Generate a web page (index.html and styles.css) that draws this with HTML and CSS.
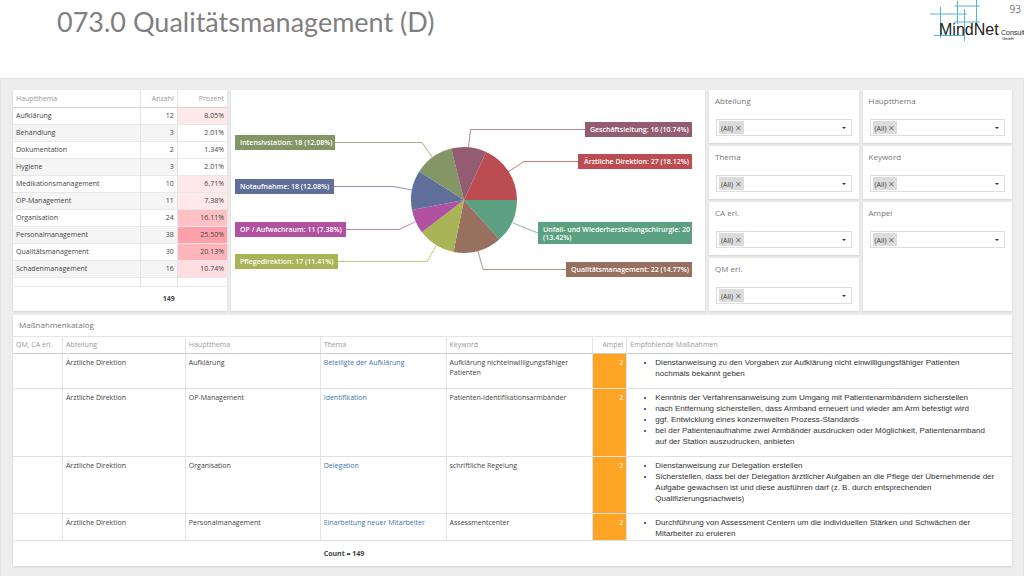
FILE: index.html
```html
<!DOCTYPE html>
<html lang="de">
<head>
<meta charset="utf-8">
<meta name="viewport" content="width=device-width, initial-scale=1">
<title>073.0 Qualitätsmanagement (D)</title>
<link rel="stylesheet" href="styles.css">
</head>
<body>
<header class="page-header">
  <h1 class="page-title">073.0 Qualitätsmanagement (D)</h1>
  <div class="brand">
    <svg class="logo" viewBox="0 0 94 42" role="img" aria-label="MindNet Consult GmbH">
      <g class="logo-grid">
        <path d="M10.5 7V38M27.5 1V24M34.5 9V41M46.5 0V24M24 6H50M0 14H37M24 22H50M4 35.5H35"/>
      </g>
      <text class="logo-name" x="9" y="35">MindNet</text>
      <text class="logo-sub" x="71" y="35">Consult</text>
      <text class="logo-legal" x="72" y="40">GmbH</text>
    </svg>
    <span class="page-number">93</span>
  </div>
</header>

<main class="dashboard">
  <div class="top-row">
    <section class="panel topics-panel">
      <table class="topics">
        <colgroup><col class="col-topic"><col class="col-count"><col class="col-percent"></colgroup>
        <thead><tr><th>Hauptthema</th><th class="num">Anzahl</th><th class="num">Prozent</th></tr></thead>
        <tbody>
          <tr><td>Aufklärung</td><td class="num">12</td><td class="num heat-1">8.05%</td></tr>
          <tr><td>Behandlung</td><td class="num">3</td><td class="num heat-0">2.01%</td></tr>
          <tr><td>Dokumentation</td><td class="num">2</td><td class="num heat-0">1.34%</td></tr>
          <tr><td>Hygiene</td><td class="num">3</td><td class="num heat-0">2.01%</td></tr>
          <tr><td>Medikationsmanagement</td><td class="num">10</td><td class="num heat-1">6.71%</td></tr>
          <tr><td>OP-Management</td><td class="num">11</td><td class="num heat-1">7.38%</td></tr>
          <tr><td>Organisation</td><td class="num">24</td><td class="num heat-3">16.11%</td></tr>
          <tr><td>Personalmanagement</td><td class="num">38</td><td class="num heat-5">25.50%</td></tr>
          <tr><td>Qualitätsmanagement</td><td class="num">30</td><td class="num heat-4">20.13%</td></tr>
          <tr><td>Schadenmanagement</td><td class="num">16</td><td class="num heat-2">10.74%</td></tr>
          <tr class="filler"><td></td><td></td><td></td></tr>
        </tbody>
        <tfoot><tr><td></td><td class="num">149</td><td></td></tr></tfoot>
      </table>
    </section>

    <section class="panel chart-panel">
      <svg class="pie" viewBox="0 0 474 221" role="img" aria-label="Verteilung nach Abteilung">
        <g class="c-unfall"><path d="M233 110L286 110A53 53 0 0 1 268.3 149.6Z"/><polyline points="307,143 282,133"/><rect x="307" y="132" width="154" height="22"/></g>
        <g class="c-quali"><path d="M233 110L268.3 149.6A53 53 0 0 1 222.5 161.9Z"/><polyline points="335,179.5 252,179.5 247,161"/><rect x="335" y="172" width="126" height="15"/></g>
        <g class="c-pflege"><path d="M233 110L222.5 161.9A53 53 0 0 1 190.9 142.2Z"/><polyline points="107,171.5 196,171.5 205,156"/><rect x="4" y="164" width="103" height="15"/></g>
        <g class="c-op"><path d="M233 110L190.9 142.2A53 53 0 0 1 181 120Z"/><polyline points="115,139.5 168,139.5 184,132"/><rect x="4" y="132" width="111" height="15"/></g>
        <g class="c-not"><path d="M233 110L181 120A53 53 0 0 1 188.3 81.4Z"/><polyline points="103,96.5 162,96.5 181,100"/><rect x="4" y="89" width="99" height="15"/></g>
        <g class="c-intensiv"><path d="M233 110L188.3 81.4A53 53 0 0 1 220.3 58.6Z"/><polyline points="104,52.5 191,52.5 201,67"/><rect x="4" y="45" width="100" height="15"/></g>
        <g class="c-gesch"><path d="M233 110L220.3 58.6A53 53 0 0 1 255.2 61.9Z"/><polyline points="354,39.5 239.5,39.5 237.5,57.5"/><rect x="354" y="32" width="107" height="15"/></g>
        <g class="c-aerzt"><path d="M233 110L255.2 61.9A53 53 0 0 1 286 110Z"/><polyline points="347,71.5 293,71.5 277,82"/><rect x="347" y="64" width="114" height="15"/></g>
        <g class="pie-labels">
          <text x="9" y="55">Intensivstation: 18 (12.08%)</text>
          <text x="9" y="99">Notaufnahme: 18 (12.08%)</text>
          <text x="9" y="142">OP / Aufwachraum: 11 (7.38%)</text>
          <text x="9" y="174">Pflegedirektion: 17 (11.41%)</text>
          <text x="359" y="42">Geschäftsleitung: 16 (10.74%)</text>
          <text x="353" y="74">Ärztliche Direktion: 27 (18.12%)</text>
          <text x="312" y="142">Unfall- und Wiederherstellungschirurgie: 20</text>
          <text x="312" y="150">(13.42%)</text>
          <text x="340" y="182">Qualitätsmanagement: 22 (14.77%)</text>
        </g>
      </svg>
    </section>

    <div class="filters">
      <section class="panel filter">
        <label for="f-abteilung">Abteilung</label>
        <div class="tagbox"><button type="button" class="tag">(All) <span class="x">✕</span></button><select id="f-abteilung"><option></option></select></div>
      </section>
      <section class="panel filter">
        <label for="f-hauptthema">Hauptthema</label>
        <div class="tagbox"><button type="button" class="tag">(All) <span class="x">✕</span></button><select id="f-hauptthema"><option></option></select></div>
      </section>
      <section class="panel filter">
        <label for="f-thema">Thema</label>
        <div class="tagbox"><button type="button" class="tag">(All) <span class="x">✕</span></button><select id="f-thema"><option></option></select></div>
      </section>
      <section class="panel filter">
        <label for="f-keyword">Keyword</label>
        <div class="tagbox"><button type="button" class="tag">(All) <span class="x">✕</span></button><select id="f-keyword"><option></option></select></div>
      </section>
      <section class="panel filter">
        <label for="f-ca">CA erl.</label>
        <div class="tagbox"><button type="button" class="tag">(All) <span class="x">✕</span></button><select id="f-ca"><option></option></select></div>
      </section>
      <section class="panel filter tall">
        <label for="f-ampel">Ampel</label>
        <div class="tagbox"><button type="button" class="tag">(All) <span class="x">✕</span></button><select id="f-ampel"><option></option></select></div>
      </section>
      <section class="panel filter">
        <label for="f-qm">QM erl.</label>
        <div class="tagbox"><button type="button" class="tag">(All) <span class="x">✕</span></button><select id="f-qm"><option></option></select></div>
      </section>
    </div>
  </div>

  <section class="panel catalog-panel">
    <h2 class="panel-title">Maßnahmenkatalog</h2>
    <table class="catalog">
      <colgroup><col class="c1"><col class="c2"><col class="c3"><col class="c4"><col class="c5"><col class="c6"><col></colgroup>
      <thead>
        <tr><th>QM, CA erl.</th><th>Abteilung</th><th>Hauptthema</th><th>Thema</th><th>Keyword</th><th class="num">Ampel</th><th>Empfohlende Maßnahmen</th></tr>
      </thead>
      <tbody>
        <tr>
          <td></td><td>Ärztliche Direktion</td><td>Aufklärung</td><td><a href="#">Beteiligte der Aufklärung</a></td><td>Aufklärung nichteinwilligungsfähiger Patienten</td><td class="ampel">2</td>
          <td class="measures"><ul><li>Dienstanweisung zu den Vorgaben zur Aufklärung nicht einwilligungsfähiger Patienten nochmals bekannt geben</li></ul></td>
        </tr>
        <tr>
          <td></td><td>Ärztliche Direktion</td><td>OP-Management</td><td><a href="#">Identifikation</a></td><td>Patienten-Identifikationsarmbänder</td><td class="ampel">2</td>
          <td class="measures"><ul><li>Kenntnis der Verfahrensanweisung zum Umgang mit Patientenarmbändern sicherstellen</li><li>nach Entfernung sicherstellen, dass Armband erneuert und wieder am Arm befestigt wird</li><li>ggf. Entwicklung eines konzernweiten Prozess-Standards</li><li>bei der Patientenaufnahme zwei Armbänder ausdrucken oder Möglichkeit, Patientenarmband auf der Station auszudrucken, anbieten</li></ul></td>
        </tr>
        <tr>
          <td></td><td>Ärztliche Direktion</td><td>Organisation</td><td><a href="#">Delegation</a></td><td>schriftliche Regelung</td><td class="ampel">2</td>
          <td class="measures"><ul><li>Dienstanweisung zur Delegation erstellen</li><li>Sicherstellen, dass bei der Delegation ärztlicher Aufgaben an die Pflege der Übernehmende der Aufgabe gewachsen ist und diese ausführen darf (z. B. durch entsprechenden Qualifizierungsnachweis)</li></ul></td>
        </tr>
        <tr class="last">
          <td></td><td>Ärztliche Direktion</td><td>Personalmanagement</td><td><a href="#">Einarbeitung neuer Mitarbeiter</a></td><td>Assessmentcenter</td><td class="ampel">2</td>
          <td class="measures"><ul><li>Durchführung von Assessment Centern um die individuellen Stärken und Schwächen der Mitarbeiter zu eruieren</li></ul></td>
        </tr>
      </tbody>
      <tfoot><tr><td></td><td></td><td></td><td>Count = 149</td><td></td><td></td><td></td></tr></tfoot>
    </table>
  </section>
</main>
</body>
</html>
```

FILE: styles.css
```css
* { box-sizing: border-box; }

body {
  margin: 0;
  min-height: 100vh;
  display: flex;
  flex-direction: column;
  background: #fff;
  color: #444;
  font: 7px/10px "Open Sans", "Noto Sans", sans-serif;
}

/* Header */
.page-header {
  display: flex;
  justify-content: space-between;
  align-items: flex-start;
  height: 78px;
  padding-left: 57px;
}
.page-title {
  margin: 6px 0 0;
  color: #7f7f7f;
  font: 400 27px/32px Lato, "Open Sans", sans-serif;
}
.brand { position: relative; width: 94px; }
.logo { display: block; width: 100%; }
.logo-grid { fill: none; stroke: #52b4d8; stroke-width: 1; }
.logo text { font-family: "Liberation Sans", Arial, sans-serif; fill: #222; }
.logo-name { font-size: 16px; }
.logo-sub { font-size: 7px; }
.logo-legal { font-size: 4px; }
.page-number {
  position: absolute;
  top: 3px;
  right: 3px;
  color: #777;
  font: 10px/12px "Open Sans", sans-serif;
}

/* Dashboard frame */
.dashboard {
  flex: 1;
  display: flex;
  flex-direction: column;
  gap: 4px;
  padding: 11px 11px 10px 12px;
  background: #ededed;
  border: 1px solid #e2e2e2;
  border-bottom: 0;
}
.panel {
  background: #fff;
  box-shadow: 0 1px 2px rgba(0, 0, 0, 0.12);
}
.top-row {
  display: grid;
  grid-template-columns: 214fr 474fr 303fr;
  gap: 4px;
}
.num { text-align: right; }

table {
  width: 100%;
  border-collapse: separate;
  border-spacing: 0;
  table-layout: fixed;
}
th {
  color: #999;
  font-weight: 400;
  text-align: left;
}
th.num { text-align: right; }

/* Topics table */
.topics th, .topics td {
  height: 17px;
  padding: 0 3px;
  border-right: 1px solid #e4e4e4;
  border-bottom: 1px solid #e8e8e8;
}
.topics th:last-child, .topics td:last-child { border-right: 0; }
.topics th {
  height: 18px;
  border-bottom-color: #d4d4d4;
}
.col-topic { width: 60%; }
.col-count { width: 17%; }
.col-percent { width: 23%; }
.topics tbody tr:nth-child(even) { background: #f5f5f5; }
.topics .heat-0 { background: #fff; }
.topics .heat-1 { background: #ffe8ea; }
.topics .heat-2 { background: #ffdde1; }
.topics .heat-3 { background: #ffc0c6; }
.topics .heat-4 { background: #ffb4bc; }
.topics .heat-5 { background: #ffa0aa; }
.topics tbody .filler { background: #fff; }
.topics .filler td { height: 9px; }
.topics tfoot td {
  height: 24px;
  border: 0;
  font-weight: 700;
}

/* Pie chart */
.pie { display: block; width: 100%; }
.pie g { stroke-width: 1; }
.pie polyline { fill: none; stroke-opacity: 0.75; }
.pie rect, .pie path { stroke: none; }
.c-unfall { fill: #5ba181; stroke: #5ba181; }
.c-quali { fill: #97705f; stroke: #97705f; }
.c-pflege { fill: #a8b455; stroke: #a8b455; }
.c-op { fill: #b152a0; stroke: #b152a0; }
.c-not { fill: #5f6f99; stroke: #5f6f99; }
.c-intensiv { fill: #839766; stroke: #839766; }
.c-gesch { fill: #945c72; stroke: #945c72; }
.c-aerzt { fill: #bb4c51; stroke: #bb4c51; }
.pie-labels {
  fill: #fff;
  font-size: 7px;
  font-weight: 600;
}

/* Filters */
.filters {
  display: grid;
  grid-template-columns: 1fr 1fr;
  grid-template-rows: repeat(4, 1fr);
  gap: 3px 4px;
}
.filter { padding: 5px 6px; }
.filter.tall { grid-row: span 2; }
.filter label {
  display: block;
  margin-bottom: 12px;
  color: #777;
  font-size: 8px;
  line-height: 12px;
}
.tagbox {
  display: flex;
  align-items: center;
  height: 17px;
  margin: 0 1px;
  padding: 0 2px;
  border: 1px solid #dedede;
}
.tag {
  height: 13px;
  padding: 0 2px;
  border: 0;
  background: #dcdcdc;
  color: #444;
  font: 7px/13px "Open Sans", sans-serif;
}
.x { color: #777; font-size: 8px; }
.tagbox select {
  flex: 1;
  min-width: 0;
  height: 15px;
  border: 0;
  appearance: none;
  background: url("data:image/svg+xml,%3Csvg xmlns='http://www.w3.org/2000/svg' width='4' height='2'%3E%3Cpath d='M0 0h4L2 2z' fill='%23333'/%3E%3C/svg%3E") no-repeat right 3px center;
}

/* Catalogue */
.catalog-panel { flex: 1; }
.panel-title {
  margin: 0;
  padding: 4px 6px 5px;
  color: #777;
  font-size: 8px;
  font-weight: 400;
  line-height: 12px;
}
.catalog th, .catalog td {
  padding: 4px 3px 8px;
  border-right: 1px solid #e4e4e4;
  border-bottom: 1px solid #e0e0e0;
  vertical-align: top;
}
.catalog th {
  padding: 3px 3px;
  border-top: 1px solid #e4e4e4;
  border-bottom-color: #ccc;
}
.catalog th:last-child, .catalog td:last-child { border-right: 0; }
.c1 { width: 5%; }
.c2 { width: 12.3%; }
.c3 { width: 13.5%; }
.c4 { width: 12.6%; }
.c5 { width: 14.7%; }
.c6 { width: 3.4%; }
.catalog a { color: #3d76b0; text-decoration: none; }
.catalog .ampel {
  background: #ffa526;
  color: #fff;
  text-align: right;
}
.catalog .measures { padding: 3px 17px 9px 3px; }
.catalog ul {
  margin: 0;
  padding-left: 25px;
  color: #333;
  font: 8px/11px "Liberation Sans", Arial, sans-serif;
}
.catalog .last td { padding-bottom: 1px; }
.catalog tfoot td {
  padding: 8px 3px 7px;
  border: 0;
  font-weight: 700;
}
```
